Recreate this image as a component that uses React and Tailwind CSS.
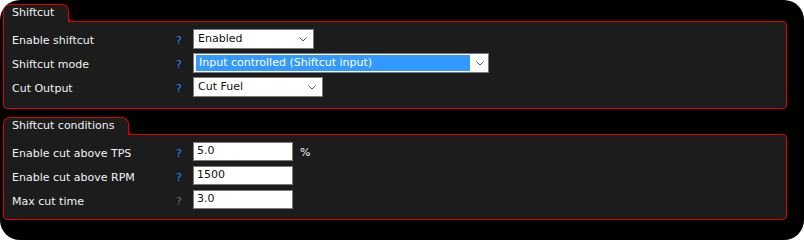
import React from "react";

const RED = "border-[#e00000]";

function Chevron() {
  return (
    <svg width="8" height="5" viewBox="0 0 8 5" className="shrink-0">
      <path d="M0.5 0.5 L4 4 L7.5 0.5" fill="none" stroke="#555" strokeWidth="1" />
    </svg>
  );
}

function Tab({ children }) {
  return (
    <div className="flex">
      <div
        className={`relative z-10 -mb-px h-[18px] border border-b-0 ${RED} rounded-t-[7px] bg-[#1c1c1c] pl-[8px] pr-[14px] leading-[15px] text-[#f2f2f2]`}
      >
        {children}
        <div
          className={`absolute -right-[6px] bottom-0 h-[6px] w-[6px] border-l border-b ${RED} rounded-bl-[5px] bg-black`}
        />
      </div>
    </div>
  );
}

function Row({ label, help = true, children }) {
  return (
    <div className="flex items-start h-[20px]">
      <div className="w-[164px] pt-[2px] leading-[20px] text-[#f2f2f2]">{label}</div>
      <div className={`w-[17px] pt-[2px] leading-[20px] ${help ? "text-[#1e90ff]" : "text-[#6e6e6e]"}`}>?</div>
      {children}
    </div>
  );
}

function Select({ value, width, highlighted }) {
  return (
    <div className={`${width} h-[20px] flex items-center bg-white border border-[#7a7a7a] text-[#111]`}>
      {highlighted ? (
        <div className="flex-1 h-[16px] ml-[2px] flex items-center bg-[#3399ff] text-white pl-[3px]">{value}</div>
      ) : (
        <div className="flex-1 pl-[4px]">{value}</div>
      )}
      <div className={`${highlighted ? "w-[18px] pl-[6px]" : "w-[14px] pl-[0px]"} flex justify-start`}>
        <Chevron />
      </div>
    </div>
  );
}

function Input({ value }) {
  return (
    <div className="w-[100px] h-[19px] flex items-center bg-white border border-[#7a7a7a] pl-[3px] text-[#111]">
      {value}
    </div>
  );
}

export default function App() {
  return (
    <div
      className="w-[804px] h-[240px] bg-black rounded-[20px] overflow-hidden pt-[4px] pl-[3px] pr-[17px] text-[11px]"
      style={{ fontFamily: '"DejaVu Sans", Verdana, sans-serif' }}
    >
      <Tab>Shiftcut</Tab>
      <div className={`h-[88px] border ${RED} rounded-b-[4px] rounded-tr-[4px] bg-[#1c1c1c] pt-[7px] pl-[8px] flex flex-col gap-[4px]`}>
        <Row label="Enable shiftcut">
          <Select value="Enabled" width="w-[121px]" />
        </Row>
        <Row label="Shiftcut mode">
          <Select value="Input controlled (Shiftcut input)" width="w-[296px]" highlighted />
        </Row>
        <Row label="Cut Output">
          <Select value="Cut Fuel" width="w-[130px]" />
        </Row>
      </div>

      <div className="h-[8px]" />

      <Tab>Shiftcut conditions</Tab>
      <div className={`h-[86px] border ${RED} rounded-b-[4px] rounded-tr-[4px] bg-[#1c1c1c] pt-[7px] pl-[8px] flex flex-col gap-[4px]`}>
        <Row label="Enable cut above TPS">
          <Input value="5.0" />
          <div className="pl-[7px] pt-[3px] leading-[16px] text-[#f2f2f2]">%</div>
        </Row>
        <Row label="Enable cut above RPM">
          <Input value="1500" />
        </Row>
        <Row label="Max cut time" help={false}>
          <Input value="3.0" />
        </Row>
      </div>
    </div>
  );
}
